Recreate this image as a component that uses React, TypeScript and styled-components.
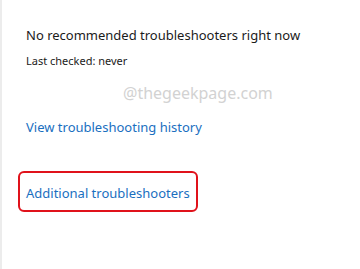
import React from 'react';
import styled, { createGlobalStyle } from 'styled-components';

const GlobalStyle = createGlobalStyle`
  html, body {
    margin: 0;
    padding: 0;
    background: #ffffff;
  }
  body {
    font-family: 'Noto Sans', 'Open Sans', sans-serif;
  }
`;

const Page = styled.div`
  width: 360px;
  height: 269px;
  box-sizing: border-box;
  border-left: 2px solid #ececec;
  padding: 26px 0 0 24px;
  overflow: hidden;
`;

const Heading = styled.div`
  font-size: 13px;
  line-height: 18px;
  color: #1b1b1b;
`;

const SubText = styled.div`
  margin-top: 10px;
  font-size: 11px;
  line-height: 14px;
  color: #1b1b1b;
`;

const Watermark = styled.div`
  margin: 15px 0 0 97px;
  font-size: 16px;
  line-height: 20px;
  color: #d2d2d2;
`;

const Link = styled.a`
  display: inline-block;
  font-size: 13px;
  line-height: 18px;
  color: #1a6fbf;
  text-decoration: none;
  cursor: pointer;
`;

const LinkRow = styled.div<{ gap: number }>`
  margin-top: ${p => p.gap}px;
`;

const Highlight = styled.div`
  display: inline-block;
  margin-left: -8px;
  padding: 8px 6px 7px 6px;
  border: 2.5px solid #e0121b;
  border-radius: 6px;
`;

export default function App() {
  return (
    <>
      <GlobalStyle />
      <Page>
        <Heading>No recommended troubleshooters right now</Heading>
        <SubText>Last checked: never</SubText>
        <Watermark>@thegeekpage.com</Watermark>
        <LinkRow gap={12}>
          <Link>View troubleshooting history</Link>
        </LinkRow>
        <LinkRow gap={34}>
          <Highlight>
            <Link>Additional troubleshooters</Link>
          </Highlight>
        </LinkRow>
      </Page>
    </>
  );
}
